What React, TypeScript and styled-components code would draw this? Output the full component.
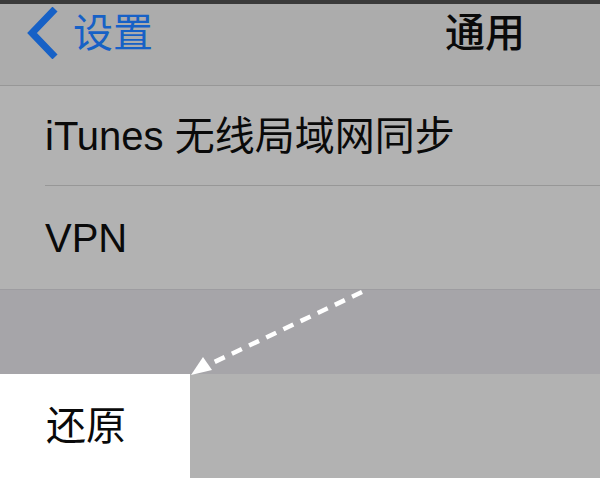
import React from 'react';
import styled, { createGlobalStyle } from 'styled-components';

const GlobalStyle = createGlobalStyle`
    html, body {
        margin: 0;
        padding: 0;
        background: #b2b2b2;
        overflow: hidden;
    }
    * {
        box-sizing: border-box;
    }
`

const Screen = styled.div`
    position: relative;
    width: 600px;
    height: 478px;
    overflow: hidden;
    display: flex;
    flex-direction: column;
    background: #b2b2b2;
    font-family: "Liberation Sans", "Noto Sans CJK SC", sans-serif;
    color: #0a0a0a;
`

const StatusStrip = styled.div`
    height: 4px;
    flex: none;
    background: #3a3a3a;
`

const NavBar = styled.div`
    height: 82px;
    flex: none;
    display: flex;
    align-items: center;
    padding: 0 75px 24px 27px;
    background: #acacac;
    border-bottom: 1px solid #979797;
`

const BackButton = styled.div`
    display: flex;
    align-items: center;
    gap: 15px;
    color: #1761c6;
    font-size: 40px;
    line-height: 1;
`

const Title = styled.div`
    margin-left: auto;
    font-size: 40px;
    font-weight: 500;
    line-height: 1;
`

const Row = styled.div<{ $height: number; $inset?: number }>`
    height: ${p => p.$height}px;
    flex: none;
    display: flex;
    padding-left: ${p => p.$inset ?? 45}px;
`

const RowInner = styled.div<{ $line: 'inset' | 'none' }>`
    flex: 1;
    display: flex;
    align-items: center;
    font-size: 40px;
    line-height: 1;
    border-bottom: ${p => p.$line === 'inset' ? '1px solid #979797' : 'none'};
`

const Section = styled.div`
    display: flex;
    flex-direction: column;
    border-bottom: 1px solid #9d9ca0;
`

const GroupHeader = styled.div`
    height: 84px;
    flex: none;
    background: #a6a5a9;
`

const ResetRow = styled.div`
    flex: 1;
    display: flex;
`

const Highlight = styled.div`
    width: 190px;
    display: flex;
    align-items: center;
    padding-left: 46px;
    background: #ffffff;
    font-size: 40px;
    line-height: 1;
`

const Pointer = styled.svg`
    position: absolute;
    left: 0;
    top: 0;
    pointer-events: none;
`

function Chevron() {
    return <svg width="31" height="52" viewBox="0 0 31 52">
        <path d="M28 2 L5 26 L28 50" fill="none" stroke="#1761c6" strokeWidth="7" strokeLinecap="butt" strokeLinejoin="miter" />
    </svg>
}

export default function App() {
    return <>
        <GlobalStyle />
        <Screen>
            <StatusStrip />
            <NavBar>
                <BackButton>
                    <Chevron />
                    <span>设置</span>
                </BackButton>
                <Title>通用</Title>
            </NavBar>
            <Section>
                <Row $height={100}>
                    <RowInner $line="inset">iTunes 无线局域网同步</RowInner>
                </Row>
                <Row $height={103}>
                    <RowInner $line="none">VPN</RowInner>
                </Row>
            </Section>
            <GroupHeader />
            <ResetRow>
                <Highlight>还原</Highlight>
            </ResetRow>
            <Pointer width="600" height="478" viewBox="0 0 600 478">
                <line x1="362" y1="292" x2="206" y2="366" stroke="#ffffff" strokeWidth="4.5" strokeDasharray="11 8" />
                <polygon points="191,375 203,357 212,370" fill="#ffffff" />
            </Pointer>
        </Screen>
    </>
}
